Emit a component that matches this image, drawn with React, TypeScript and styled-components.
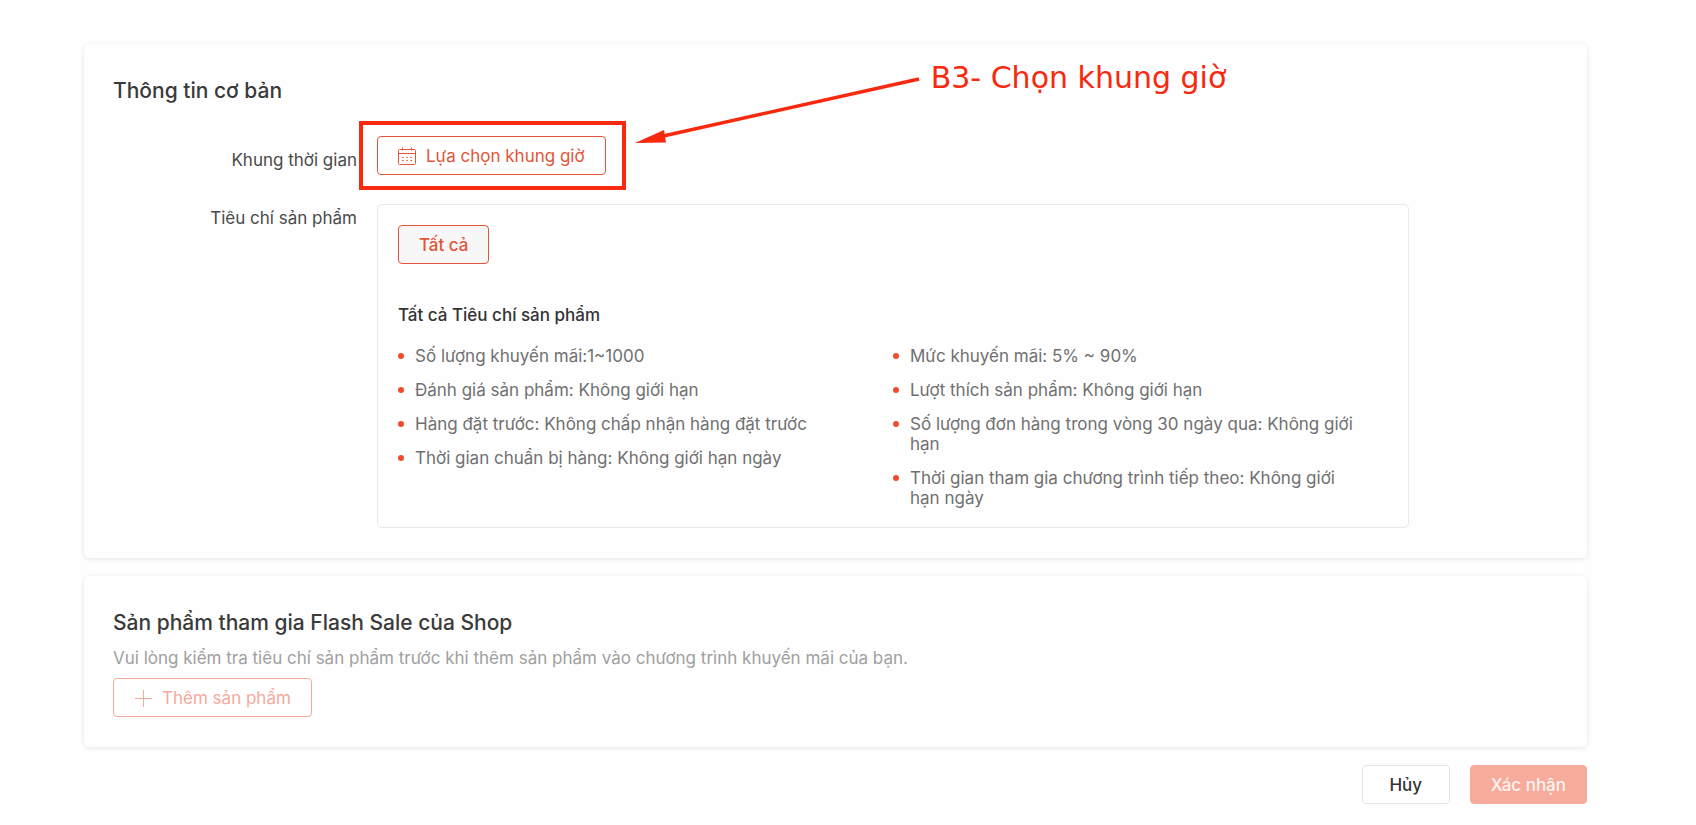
import React from "react";
import styled, { createGlobalStyle, css } from "styled-components";

const GlobalStyle = createGlobalStyle`
  *, *::before, *::after { box-sizing: border-box; }
  body {
    margin: 0;
    background: #fefefe;
    color: #333;
    font-family: Inter, "Liberation Sans", sans-serif;
    font-size: 17px;
    line-height: 24px;
  }
`;

const brand = "#e2553a";
const marker = "#f7290f";

const Page = styled.main`
  display: flex;
  flex-direction: column;
  gap: 18px;
  padding: 44px 109px 20px 84px;
`;

const Card = styled.section`
  padding: 30px 29px;
  background: #fefefe;
  border-radius: 5px;
  box-shadow: 0 1px 5px rgba(0, 0, 0, 0.1);
`;

const CardTitle = styled.h2`
  margin: 0;
  font-size: 21px;
  line-height: 34px;
  font-weight: 500;
  color: #3a3a3a;
`;

const Form = styled.div`
  display: grid;
  grid-template-columns: 244px minmax(0, 1fr);
  column-gap: 20px;
  row-gap: 21px;
  margin-top: 28px;
`;

const Label = styled.label`
  padding-top: 2px;
  text-align: right;
  color: #4a4a4a;
`;

const TimeLabel = styled(Label)`
  padding: 12px 0 11px;
`;

const Button = styled.button<{ $kind: "outline" | "selected" | "muted" | "plain" | "primary" }>`
  display: inline-flex;
  align-items: center;
  justify-content: center;
  gap: 10px;
  height: 39px;
  padding: 0 20px;
  border: 1px solid ${brand};
  border-radius: 4px;
  background: #fff;
  color: ${brand};
  font: inherit;
  font-weight: 500;
  white-space: nowrap;
  cursor: pointer;

  &:disabled { cursor: not-allowed; }

  ${(p) => p.$kind === "outline" && css`font-weight: 400;`}
  ${(p) => p.$kind === "selected" && css`background: #f7f7f7;`}
  ${(p) => p.$kind === "muted" && css`
    border-color: #f5aa9b;
    color: #f5aa9b;
    font-weight: 400;
  `}
  ${(p) => p.$kind === "plain" && css`
    min-width: 88px;
    border-color: #e4e4e4;
    color: #333;
  `}
  ${(p) => p.$kind === "primary" && css`
    border-color: #f6ab9d;
    background: #f6ab9d;
    color: #fff3f0;
  `}
`;

const Callout = styled.div`
  position: relative;
  justify-self: start;
  height: 39px;
`;

const CalloutFrame = styled.div`
  position: absolute;
  inset: -15px -20px -15px -18px;
  border: 4px solid ${marker};
  pointer-events: none;
`;

const CalloutArrow = styled.svg`
  position: absolute;
  left: calc(100% + 27px);
  top: -62px;
  pointer-events: none;
`;

const CalloutText = styled.div`
  position: absolute;
  left: calc(100% + 325px);
  top: -76px;
  font-family: "DejaVu Sans", sans-serif;
  font-size: 30px;
  line-height: 36px;
  white-space: nowrap;
  color: ${marker};
`;

const Criteria = styled.div`
  margin-right: 149px;
  padding: 20px 20px 19px;
  border: 1px solid #e8e8e8;
  border-radius: 5px;
`;

const CriteriaTitle = styled.h3`
  margin: 39px 0 19px;
  font-size: 17px;
  line-height: 24px;
  font-weight: 500;
`;

const Columns = styled.div`
  display: grid;
  grid-template-columns: 1fr 1fr;
`;

const List = styled.ul`
  display: flex;
  flex-direction: column;
  gap: 14px;
  margin: 0;
  padding: 0 24px 0 0;
  list-style: none;
`;

const Item = styled.li`
  display: flex;
  gap: 11px;
  line-height: 20px;
  color: #707070;

  &::before {
    content: "";
    flex: none;
    width: 6px;
    height: 6px;
    margin-top: 7px;
    border-radius: 50%;
    background: #ee4d2d;
  }
`;

const Hint = styled.p`
  margin: 6px 0 8px;
  color: #a0a0a0;
`;

const Actions = styled.div`
  display: flex;
  justify-content: flex-end;
  gap: 20px;
`;

const CalendarIcon = () => (
  <svg width="18" height="18" viewBox="0 0 18 18" fill="none" stroke="currentColor" aria-hidden="true">
    <rect x="0.5" y="2.5" width="17" height="15" rx="1" />
    <path d="M0.5 6.5H17.5M4.5 0.5V3.5M13.5 0.5V3.5" />
    <path d="M4 10.5H5.6M8.2 10.5H9.8M12.4 10.5H14M4 13.5H5.6M8.2 13.5H9.8M12.4 13.5H14" />
  </svg>
);

const PlusIcon = () => (
  <svg width="18" height="18" viewBox="0 0 18 18" fill="none" stroke="currentColor" aria-hidden="true">
    <path d="M1 9.5H18M9.5 1V18" />
  </svg>
);

const leftCriteria = [
  "Số lượng khuyến mãi:1~1000",
  "Đánh giá sản phẩm: Không giới hạn",
  "Hàng đặt trước: Không chấp nhận hàng đặt trước",
  "Thời gian chuẩn bị hàng: Không giới hạn ngày",
];

const rightCriteria = [
  "Mức khuyến mãi: 5% ~ 90%",
  "Lượt thích sản phẩm: Không giới hạn",
  "Số lượng đơn hàng trong vòng 30 ngày qua: Không giới hạn",
  "Thời gian tham gia chương trình tiếp theo: Không giới hạn ngày",
];

export default function App() {
  return (
    <>
      <GlobalStyle />
      <Page>
        <Card>
          <CardTitle>Thông tin cơ bản</CardTitle>
          <Form>
            <TimeLabel htmlFor="time-slot">Khung thời gian</TimeLabel>
            <Callout>
              <Button id="time-slot" type="button" $kind="outline">
                <CalendarIcon />
                Lựa chọn khung giờ
              </Button>
              <CalloutFrame />
              <CalloutArrow width="288" height="72" viewBox="0 0 288 72" aria-hidden="true">
                <path d="M286 5L28 62.5" stroke={marker} strokeWidth="3.5" />
                <path d="M2 69L31 56L33 68.5Z" fill={marker} />
              </CalloutArrow>
              <CalloutText>B3- Chọn khung giờ</CalloutText>
            </Callout>
            <Label htmlFor="criteria-all">Tiêu chí sản phẩm</Label>
            <Criteria>
              <Button id="criteria-all" type="button" $kind="selected">Tất cả</Button>
              <CriteriaTitle>Tất cả Tiêu chí sản phẩm</CriteriaTitle>
              <Columns>
                <List>{leftCriteria.map((text) => <Item key={text}>{text}</Item>)}</List>
                <List>{rightCriteria.map((text) => <Item key={text}>{text}</Item>)}</List>
              </Columns>
            </Criteria>
          </Form>
        </Card>
        <Card>
          <CardTitle>Sản phẩm tham gia Flash Sale của Shop</CardTitle>
          <Hint>Vui lòng kiểm tra tiêu chí sản phẩm trước khi thêm sản phẩm vào chương trình khuyến mãi của bạn.</Hint>
          <Button type="button" disabled $kind="muted">
            <PlusIcon />
            Thêm sản phẩm
          </Button>
        </Card>
        <Actions>
          <Button type="button" $kind="plain">Hủy</Button>
          <Button type="button" disabled $kind="primary">Xác nhận</Button>
        </Actions>
      </Page>
    </>
  );
}
